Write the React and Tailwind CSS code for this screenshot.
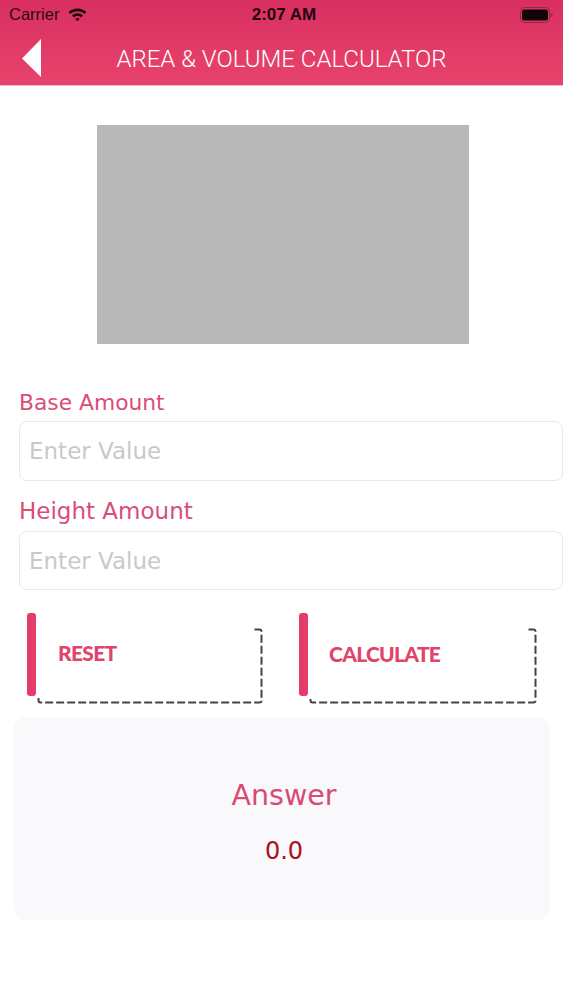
import React from "react";

function Dashed({ right }) {
  const d = `M${right - 7} 2.5H${right - 2}Q${right} 2.5 ${right} 4.5V73.5Q${right} 75.5 ${right - 2} 75.5H3.5Q1.5 75.5 1.5 73.5V71`;
  return (
    <svg className="absolute left-[10px] top-[14px]" width="232" height="78" viewBox="0 0 232 78" fill="none">
      <path d={d} stroke="#444" strokeWidth="2" strokeDasharray="8 3" />
    </svg>
  );
}

function ActionButton({ label, text, right }) {
  return (
    <div className="relative flex h-[92px] w-[236px] items-start">
      <div className="h-[83px] w-[9px] rounded-[3px] bg-[#e33d69]" />
      <div className={text}>{label}</div>
      <Dashed right={right} />
    </div>
  );
}

function Field({ label, labelClass, inputClass }) {
  return (
    <div className="flex flex-col">
      <div className={labelClass}>{label}</div>
      <input readOnly placeholder="Enter Value" className={inputClass} />
    </div>
  );
}

export default function App() {
  return (
    <div className="flex h-[1000px] w-[563px] flex-col overflow-hidden bg-white font-['DejaVu_Sans',sans-serif]">
      <header className="h-[86px] border-b border-[#f3b9c9] bg-gradient-to-b from-[#d82f60] to-[#e8436c]">
        <div className="flex h-[29px] items-center justify-between pl-[9px] pr-[10px] font-['Liberation_Sans',sans-serif] text-[#2b0a16]">
          <div className="flex w-[196px] items-center gap-[9px] text-[16.5px]">
            <span>Carrier</span>
            <svg width="19" height="14" viewBox="0 0 19 14" fill="#1f0610">
              <path d="M9.5 0.5C6 0.5 3 1.8 0.5 4L2.4 6C4.3 4.3 6.8 3.3 9.5 3.3C12.2 3.3 14.7 4.3 16.6 6L18.5 4C16 1.8 13 0.5 9.5 0.5Z" />
              <path d="M9.5 5.3C7.5 5.3 5.5 6 4 7.4L6 9.4C7 8.6 8.2 8.1 9.5 8.1C10.8 8.1 12 8.6 13 9.4L15 7.4C13.5 6 11.5 5.3 9.5 5.3Z" />
              <path d="M9.5 10C8.7 10 7.9 10.3 7.3 10.8L9.5 13.2L11.7 10.8C11.1 10.3 10.3 10 9.5 10Z" />
            </svg>
          </div>
          <div className="text-[17px] font-bold text-[#1f0610]">2:07 AM</div>
          <div className="flex w-[190px] justify-end">
            <svg width="33" height="16" viewBox="0 0 33 16" fill="none">
              <rect x="0.5" y="0.5" width="29" height="15" rx="4" stroke="#8d2a49" />
              <rect x="2" y="2.5" width="26" height="11" rx="2.5" fill="#12050a" />
              <rect x="31" y="6" width="1.5" height="4" rx="0.7" fill="#8d2a49" />
            </svg>
          </div>
        </div>
        <div className="relative flex h-[56px] items-center justify-center pt-[3px]">
          <svg className="absolute left-[21px] top-[10px]" width="20" height="38" viewBox="0 0 20 38" fill="#fff">
            <path d="M20 0V38L1 19.5Z" />
          </svg>
          <div className="font-['Roboto',sans-serif] text-[24px] font-light text-white">AREA &amp; VOLUME CALCULATOR</div>
        </div>
      </header>

      <div className="ml-[97px] mt-[39px] h-[219px] w-[372px] bg-[#b9b8b9]" />

      <div className="mt-[44px] flex flex-col pl-[19px]">
        <Field
          label="Base Amount"
          labelClass="h-[33px] pt-[1px] text-[21.8px] leading-[28px] text-[#d94e77]"
          inputClass="h-[60px] w-full rounded-[8px] border border-[#e8e8e8] bg-white pl-[9px] font-['DejaVu_Sans',sans-serif] text-[23px] outline-none placeholder:text-[#c9c9c9]"
        />
        <div className="h-[14px]" />
        <Field
          label="Height Amount"
          labelClass="h-[36px] text-[23px] leading-[32px] text-[#d94e77]"
          inputClass="h-[59px] w-full rounded-[8px] border border-[#e8e8e8] bg-white pl-[9px] font-['DejaVu_Sans',sans-serif] text-[23px] outline-none placeholder:text-[#c9c9c9]"
        />
      </div>

      <div className="mt-[23px] flex gap-[36px] pl-[27px]">
        <ActionButton
          right={224.5}
          label="RESET"
          text="ml-[22px] mt-[26px] font-['Lato',sans-serif] text-[21px] leading-[28px] font-black tracking-[-0.7px] text-[#e0436c]"
        />
        <ActionButton
          right={226.5}
          label="CALCULATE"
          text="ml-[21px] mt-[27px] font-['Lato',sans-serif] text-[21px] leading-[28px] font-black tracking-[-0.7px] text-[#e0436c]"
        />
      </div>

      <div className="ml-[14px] mt-[12px] flex h-[203px] w-[536px] flex-col items-center rounded-[12px] bg-[#f9f8fa] pl-[4px] pt-[60px]">
        <div className="text-[28.5px] leading-[38px] text-[#d94a73]">Answer</div>
        <div className="mt-[20px] text-[24px] leading-[32px] text-[#ac0e1c]">0.0</div>
      </div>
    </div>
  );
}
